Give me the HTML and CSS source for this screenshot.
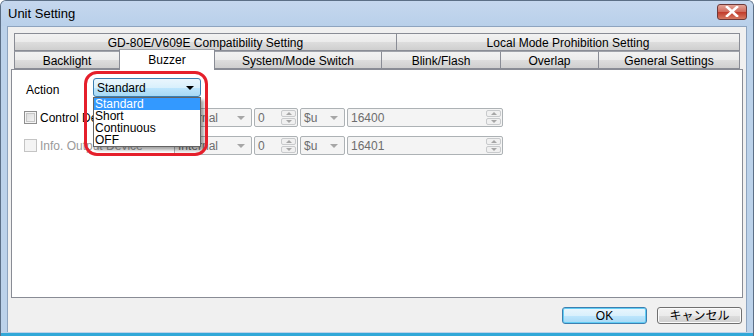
FILE: index.html
```html
<!DOCTYPE html>
<html>
<head>
    <title>Unit Setting</title>
    <link rel="stylesheet" href="styles.css">
</head>
<body>
    <div class="window">
        <div class="titlebar">
            <span class="title">Unit Setting</span>
            <div class="close-btn">
                <svg width="14" height="11" viewBox="0 0 14 11">
                    <path d="M2 1 L12 10 M12 1 L2 10" stroke="#ffffff" stroke-width="2.6" stroke-linecap="square" fill="none"/>
                </svg>
            </div>
        </div>

        <div class="client">
            <div class="tabs">
                <div class="tab-row top-row">
                    <div class="tab" style="width: 382px;">GD-80E/V609E Compatibility Setting</div>
                    <div class="tab" style="width: 344px;">Local Mode Prohibition Setting</div>
                </div>
                <div class="tab-row">
                    <div class="tab" style="width: 105px;">Backlight</div>
                    <div class="tab selected" style="width: 96px;">Buzzer</div>
                    <div class="tab" style="width: 166px;">System/Mode Switch</div>
                    <div class="tab" style="width: 119px;">Blink/Flash</div>
                    <div class="tab" style="width: 98px;">Overlap</div>
                    <div class="tab" style="width: 142px;">General Settings</div>
                </div>
            </div>

            <div class="panel">
                <div class="row action-row">
                    <span class="action-label">Action</span>
                    <div class="combo active">
                        <span>Standard</span>
                        <i class="arrow"></i>
                    </div>
                </div>

                <div class="row device-row first">
                    <div class="check-cell">
                        <span class="checkbox"></span>
                        <span>Control Device</span>
                    </div>
                    <div class="combo disabled w-internal"><span>Internal</span><i class="arrow"></i></div>
                    <div class="spin w-zero"><span>0</span><div class="spin-btns"><b class="up"></b><b class="down"></b></div></div>
                    <div class="combo disabled w-dollar"><span>$u</span><i class="arrow"></i></div>
                    <div class="spin w-addr"><span>16400</span><div class="spin-btns"><b class="up"></b><b class="down"></b></div></div>
                </div>

                <div class="row device-row">
                    <div class="check-cell off">
                        <span class="checkbox"></span>
                        <span>Info. Output Device</span>
                    </div>
                    <div class="combo disabled w-internal"><span>Internal</span><i class="arrow"></i></div>
                    <div class="spin w-zero"><span>0</span><div class="spin-btns"><b class="up"></b><b class="down"></b></div></div>
                    <div class="combo disabled w-dollar"><span>$u</span><i class="arrow"></i></div>
                    <div class="spin w-addr"><span>16401</span><div class="spin-btns"><b class="up"></b><b class="down"></b></div></div>
                </div>

                <ul class="dropdown">
                    <li class="hl">Standard</li>
                    <li>Short</li>
                    <li>Continuous</li>
                    <li>OFF</li>
                </ul>

                <div class="marker"></div>
            </div>

            <div class="buttons">
                <button class="btn default">OK</button>
                <button class="btn">キャンセル</button>
            </div>
        </div>
    </div>
</body>
</html>
```

FILE: styles.css
```css
* { box-sizing: border-box; }
body { margin: 0; font-family: "Liberation Sans", Arial, "Noto Sans CJK JP", sans-serif; font-size: 12px; color: #000; }

.window { width: 754px; height: 336px; background: #bcd2ea; border: 1px solid #5c6f86; border-bottom: none; border-radius: 6px 6px 0 0; display: flex; flex-direction: column; box-shadow: inset 0 -3px 0 #31a8d8; }
.titlebar { height: 25px; display: flex; align-items: center; justify-content: space-between; padding: 0 6px 0 7px; background: linear-gradient(#c5d7ee, #b9d0ea); border-radius: 5px 5px 0 0; }
.title { font-size: 13px; color: #000; padding-bottom: 1px; }
.close-btn { width: 30px; height: 16px; margin-top: -4px; border: 1px solid #6e3a3a; border-radius: 3px; background: linear-gradient(#e3a497, #d0695b 50%, #c13a2a 51%, #d67a62); display: flex; align-items: center; justify-content: center; }

.client { flex: 1; margin: 0 6px 4px 6px; background: #f0f0f0; border: 1px solid #8ea4bf; border-bottom: none; padding: 6px 0 0 3px; display: flex; flex-direction: column; }

.tabs { margin-left: 3px; height: 36px; position: relative; }
.tab-row { display: flex; height: 18px; }
.top-row { height: 18px; }
.tab { height: 18px; border: 1px solid #898c95; border-right: none; background: linear-gradient(#f2f2f2, #ebebeb 50%, #dddddd 51%, #cfcfcf); display: flex; align-items: center; justify-content: center; line-height: 12px; padding-top: 2px; }
.tab:last-child { border-right: 1px solid #898c95; }
.tab-row + .tab-row .tab { border-top-color: #a0a3aa; }
.tab.selected { background: #ffffff; height: 21px; margin-top: -2px; border-right: 1px solid #898c95; border-bottom: none; position: relative; z-index: 2; padding-top: 0; }
.tab.selected + .tab { border-left: none; }

.panel { position: relative; width: 732px; height: 229px; background: #ffffff; border: 1px solid #898c95; padding: 8px 0 0 12px; }

.row { display: flex; align-items: center; height: 19px; }
.action-label { width: 69px; padding-left: 2px; padding-top: 4px; }
.device-row.first { margin-top: 11px; }
.device-row { margin-top: 9px; }
.check-cell { width: 150px; display: flex; align-items: center; gap: 2px; white-space: nowrap; overflow: visible; }
.check-cell.off { color: #9a9a9a; }
.checkbox { width: 13px; height: 13px; border: 1px solid #8f8f8f; background: linear-gradient(135deg, #d8d8d8, #f8f8f8); box-shadow: inset 0 0 0 1px #f4f4f4, inset 0 0 0 2px #c6c6c6; margin-right: 1px; }
.check-cell.off .checkbox { border-color: #c4c4c4; box-shadow: none; background: #f4f4f4; }

.combo { height: 19px; display: flex; align-items: center; justify-content: space-between; border: 1px solid #adb2b5; border-radius: 2px; padding: 0 6px 0 3px; margin-right: 2px; }
.combo.active { width: 108px; border-color: #3c7fb1; border-radius: 3px; background: linear-gradient(#eaf6fd, #d9f0fc 50%, #bee6fd 51%, #a7d9f5); }
.combo.disabled { background: #f4f4f4; color: #6d6d6d; }
.arrow { width: 0; height: 0; border-left: 4px solid transparent; border-right: 4px solid transparent; border-top: 4px solid #000; }
.combo.disabled .arrow { border-top-color: #a6a6a6; }
.w-internal { width: 78px; }
.w-dollar { width: 45px; }

.spin { height: 19px; display: flex; align-items: center; justify-content: space-between; border: 1px solid #adb2b5; border-radius: 2px; background: #f4f4f4; color: #6d6d6d; padding: 0 1px 0 3px; margin-right: 2px; }
.w-zero { width: 44px; }
.w-addr { width: 156px; }
.spin-btns { display: flex; flex-direction: column; gap: 1px; }
.spin-btns b { width: 15px; height: 7px; border: 1px solid #c8cacc; border-radius: 2px; background: #f0f0f0; display: flex; align-items: center; justify-content: center; }
.spin-btns b::after { content: ""; border-left: 3px solid transparent; border-right: 3px solid transparent; }
.spin-btns .up::after { border-bottom: 3px solid #a6a6a6; }
.spin-btns .down::after { border-top: 3px solid #a6a6a6; }

.dropdown { position: absolute; left: 81px; top: 27px; width: 108px; height: 50px; margin: 0; padding: 0; list-style: none; background: #ffffff; border: 1px solid #646464; box-shadow: 3px 3px 3px rgba(0, 0, 0, 0.35); z-index: 3; }
.dropdown li { height: 12px; line-height: 12px; padding-left: 1px; }
.dropdown li.hl { background: #3399ff; color: #ffffff; }

.marker { position: absolute; left: 72px; top: 1px; width: 124px; height: 85px; border: 3px solid #e51f2b; border-radius: 13px; z-index: 4; }

.buttons { display: flex; justify-content: flex-end; gap: 10px; padding: 9px 0 0 0; margin-right: 4px; }
.btn { width: 85px; height: 17px; padding: 0; font-family: "Liberation Sans", "Noto Sans CJK JP", sans-serif; font-size: 12px; line-height: 12px; border: 1px solid #707070; border-radius: 3px; background: linear-gradient(#f2f2f2, #ebebeb 50%, #dddddd 51%, #cfcfcf); box-shadow: inset 0 0 0 1px #fbfbfb; }
.btn.default { border-color: #3c7fb1; background: linear-gradient(#eaf6fd, #d9f0fc 50%, #bee6fd 51%, #a7d9f5); box-shadow: inset 0 0 0 1px #62cdf4; }
```
